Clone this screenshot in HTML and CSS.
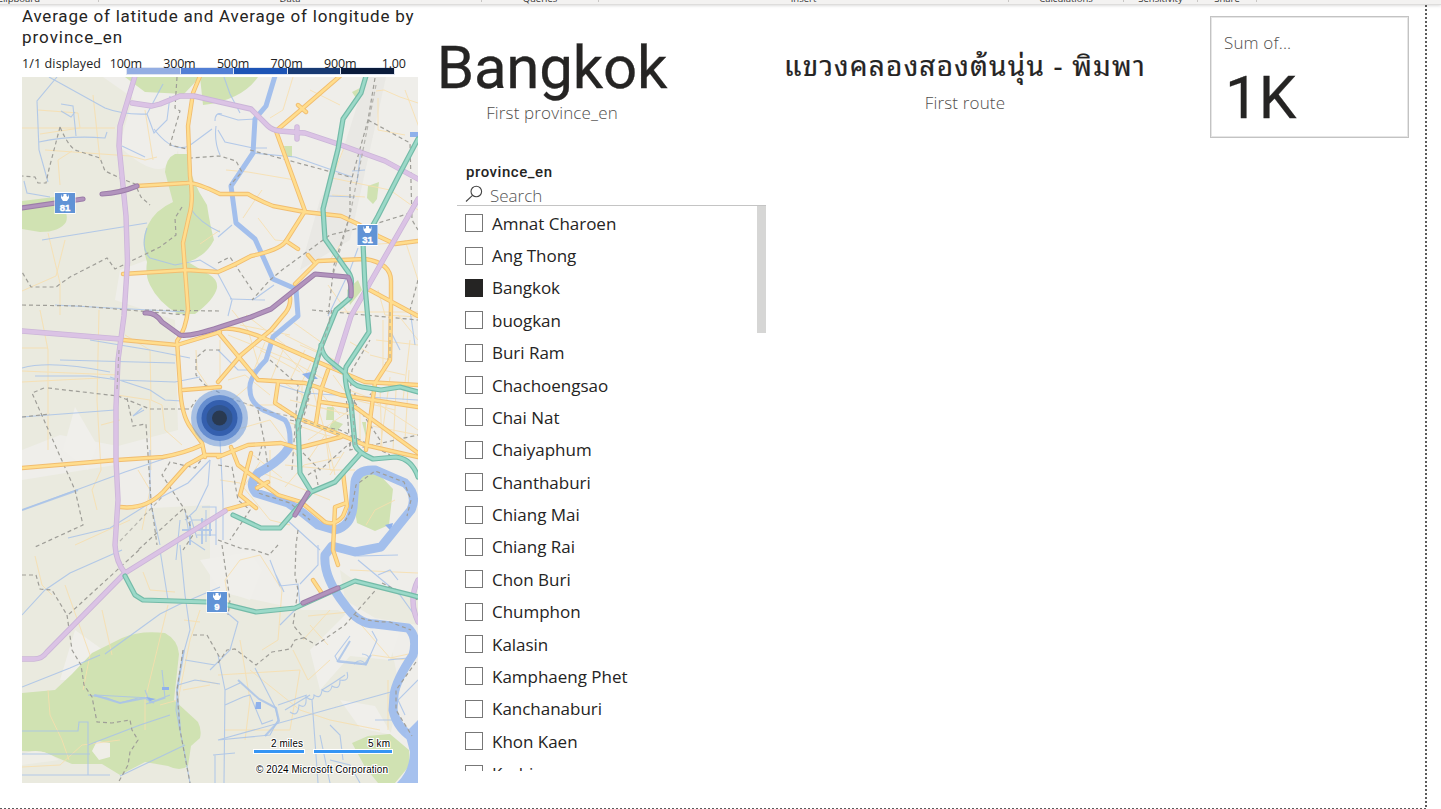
FILE: index.html
```html
<!DOCTYPE html>
<html lang="en">
<head>
<meta charset="utf-8">
<title>Province report</title>
<link rel="stylesheet" href="styles.css">
</head>
<body>
<header class="ribbon">
  <span>Clipboard</span><span>Data</span><span>Queries</span><span>Insert</span><span>Calculations</span><span>Sensitivity</span><span>Share</span>
</header>
<main class="canvas">
  <section class="map-visual">
    <h2 class="map-title"><span class="t1">Average of latitude and Average of longitude by</span><br><span class="t2">province_en</span></h2>
    <div class="legend">
      <span class="shown">1/1 displayed</span>
      <div class="scale">
        <div class="ticks"><span>100m</span><span>300m</span><span>500m</span><span>700m</span><span>900m</span><span>1.00</span></div>
        <div class="bar"><i class="c1"></i><i class="c2"></i><i class="c3"></i><i class="c4"></i><i class="c5"></i></div>
      </div>
    </div>
    <svg class="map" viewBox="22 77 396 706" width="396" height="706">
      <defs>
        <g id="toll">
          <path d="M135 76L120 126L119 146L126 216L127.500 262L124 316L118 360L116 407V460L118 500L115 545Q116 562 125 573L47 652Q42 659 34 659H22M125 573L170 545L225 511"/>
          <path d="M132 103L152 106L160 104L180 96L194 96L220 102L251 109L268 126Q272 130 280 131L305 133L338 144L385 161L418 179M418 199L351 316L335 367M22 331L120 339M418 580Q408 600 418 622M297 127V139"/>
        </g>
        <g id="teal">
          <path d="M366 76L361 93L343 119L338 149L323 209L325 239L346 269Q353 277 351 285L350 298L336 310L321 347L298 423L300 473L311 491"/>
          <path d="M321 345Q322 355 330 361L345 373Q353 386 362 387L381 390L400 387L418 392M418 139L400 173L378 216L363 243L365 286L369 332L346 367Q343 380 351 403L355 445Q357 452 373 459L396 457Q412 459 418 477M361 453L335 482L311 492L280 528H261L233 515"/>
          <path d="M125 576L135 595L143 600L207 602L228 605L256 612L295 608L355 581L411 595L418 597"/>
        </g>
        <g id="violet">
          <path d="M22 208L83 199M102 194Q120 193 137 186M145 313Q155 312 162 322L180 335Q190 337 220 327L251 317L271 309L315 274L348 277Q352 284 351 296M308 493L295 515M303 603L338 588"/>
        </g>
        <g id="major">
          <path d="M200 76L193 93L188 126L190 176Q194 200 189 216L183 243L188 309Q186 330 177 341L180 385Q181 415 191 428L202 443L205 457"/>
          <path d="M137 186L187 183Q195 182 220 194L248 194Q262 202 273 206L305 212L341 216L358 224L378 236L395 244L418 241M340 76L303 108L276 131L305 211L286 241Q280 250 251 256Q235 265 218 272L187 270L123 274"/>
          <path d="M286 241L298 249M308 255L315 263M295 284L318 261L365 259Q391 263 391 281V306L390 360L375 383L366 450M368 289L418 316M290 297Q291 305 286 312L271 330L241 355L218 382M123 340L177 345L220 332"/>
          <path d="M218 330Q230 325 261 337L318 362L365 382L418 385M218 332L258 380L305 383L341 395L418 407M328 370L321 390L316 423M278 383L275 403L298 418L341 435L365 445L418 457M321 402L355 407L418 453M341 437L298 448L281 443L248 445L218 457"/>
          <path d="M183 390L220 387M22 468L117 460L163 457Q185 453 202 445M120 507Q145 510 163 492L187 465L205 455H220M231 447L238 465L278 495L301 502L325 522Q335 526 343 516L347 506L343 473M251 453L240 495L256 508M250 503L225 510M346 503L335 507L333 550L338 565M313 580L321 592M257 488L268 482M298 105L306 112"/>
        </g>
        <g id="marker"><rect x="-10.500" y="-11" width="21" height="22" fill="#fff"/><rect x="-10" y="-10" width="20" height="20" fill="#6093d6"/><path d="M-4 -9L-3 -6L-1.500 -7V-9H1.500V-7L3 -6L4 -9V-5L2 -2H-2L-4 -5Z" fill="#fff"/></g>
      </defs>
      <rect x="22" y="77" width="396" height="706" fill="#efeeea"/>
      <!-- land cover -->
      <path fill="#eaeadf" d="M22 77H103L133 98L119 146Q166 190 178 150L188 245L120 270L115 300L175 320L178 430L118 446L60 435L22 450ZM22 480L115 465V510L210 505V590L303 610L338 610L390 640L400 690L380 783H22V659L125 573L118 510L22 560ZM340 570L355 581L418 597V625L375 618L345 600ZM22 560L118 510L125 573L22 659Z"/>
      <g fill="#f0efeb"><path d="M75 407L97 445L88 470L63 450ZM75 630L103 650L125 640L100 680L60 680ZM310 650L350 610L400 630L390 660L350 656L320 690ZM375 706L392 735L360 728L340 700ZM200 560L250 552L262 570L250 600L220 590Z"/></g>
      <path fill="#e5e4df" opacity=".6" d="M366 77H386L350 240L300 270L320 200L340 160Z"/>
      <g fill="#d0e2b2">
        <path d="M125 77H200L184 94L145 92ZM177 77H258Q242 100 203 105L200 77ZM165 172Q166 158 175 154L187 154Q190 180 207 205Q210 225 214 240Q206 256 188 262L210 275Q218 280 217 288Q214 300 195 314H178Q158 302 150 285Q145 275 147 262Q140 240 148 225Q155 210 173 202ZM22 201L55 197Q70 210 66 222Q60 232 40 232L22 229ZM92 653L122 638Q140 630 165 633Q178 640 179 654L174 700L198 722Q202 730 200 738L191 746L188 766Q180 772 168 766L145 762L120 775L102 764L72 764L44 752L22 751V693L55 690L72 674ZM360 477L376 471L393 489L389 525L375 531L357 523L353 500ZM352 743L368 736L390 734L409 750L410 765L395 783H378L365 767Z"/>
        <path d="M368 186L379 182L377 199L373 204L367 198ZM347 290L358 280L362 290L350 305ZM327 407H334V420H326ZM333 420L343 424L337 431L328 430ZM284 146H292V157L286 156ZM362 422H366V437ZM352 92L360 88L356 98Z"/>
      </g>
      <path fill="#efeee7" d="M97 741L110 743V757L99 760L92 751ZM22 755Q38 745 59 760L22 765Z"/>
      <!-- residential and secondary streets -->
      <g class="street">
        <path d="M22 128H115M38 110L78 113L80 128L40 134M45 150L130 156L145 160L157 157M48 233L60 283L60 315M22 291L56 276L65 240M60 185L58 160L72 151M153 160L145 110M93 95L100 160M22 348H48M40 310L48 350V450M22 371L118 375M99 310L97 400L101 470L92 490M117 395L150 400L151 470M125 335L150 350L151 400L162 405L165 430L182 445M138 470L150 490L142 530M75 545L130 520M92 490L97 510M35 556L42 585L52 595M102 610L112 655M65 585L90 655L83 690M168 605L145 700L145 730M48 690L50 715L62 740L69 760M22 767L60 765L82 745L120 740M22 382L100 378M101 425L120 420"/>
        <path d="M143 572L150 590L175 592M200 610L190 640L184 670L178 700L160 705M184 620L200 622M183 690L210 685M200 680L218 684M230 610L225 580L240 560L260 555L282 590L278 640L262 650M303 640L330 610M308 616L350 612L390 658L418 652M293 650L308 680L330 660M310 625L328 645M372 655L406 660L398 685M350 570L418 573M218 675L300 670L290 730L225 730M240 640L250 700L245 740M250 670L300 710L330 720L380 730M388 730L388 680"/>
        <path d="M293 77L283 110L270 118M310 90L340 105M376 91L384 90L400 97L418 103M378 98V130L405 135M405 90L420 130M345 145L332 178L390 190L418 210M332 195L365 197M226 170L248 172L295 180M220 230L200 244M243 218L255 200L262 190M258 218L275 240L286 241M362 245L395 243M340 245L330 260M405 240L418 280M378 290L385 315L418 317M328 285L350 316M340 312L420 312"/>
        <path d="M196 350L197 370L212 392M220 340L220 380M232 310L248 330L260 370M246 315L285 345M240 325L290 335M228 380L245 375L270 395M232 400L250 385M235 430L270 420L300 460M247 405L282 405M278 345L310 380L326 435L335 475M290 320L325 345M285 335L325 355M300 345L335 360M305 375L340 415M290 400L330 410M325 430L330 470L355 470M308 460L325 435L352 440M285 465L335 470M270 450L270 490M255 470L330 500M220 480L240 483L270 520L290 525M355 400L395 410M383 320L383 370L405 375M398 315L418 340M376 340L418 345M370 355L390 360M372 400L418 430M380 390L382 450M396 390L393 450M367 425L418 435M410 340L403 400M333 375L355 405M308 440L350 410M302 385L302 415M265 342L250 380M395 500L375 510L366 525"/>
        <path d="M228 335L290 360L325 380M260 350L300 372M283 350L270 382M305 350L289 382M311 363L298 390M280 380L310 400M282 420L325 435M310 405L350 415M253 455L282 478M260 462L245 485M285 487L304 465L340 457M330 475L344 452M350 342L369 353M349 390L388 405M360 410L360 440M390 377L380 450M409 370L405 440"/>
      </g>
      <!-- canals -->
      <g class="canal">
        <path d="M57 77L37 101L39 150L48 182M49 77L105 108Q123 115 147 114L163 84M61 104L73 106L76 136M61 111L71 117L75 112M39 142Q70 135 105 138L107 132M24 181L27 193L50 197M42 240L147 223M122 146L145 157M147 114L154 133L167 120L170 96M154 129Q172 153 189 146L212 129M220 155Q214 142 216 126M215 121Q215 112 222 114M190 208Q200 223 220 232M147 228Q140 248 150 258L175 265L200 260L220 272M55 305L187 312M60 360L175 363M22 368Q50 360 110 372M35 376H90L118 380L175 382L200 377M90 340L150 350L190 358M110 377L150 390L165 400L182 401M22 417L115 410"/>
        <path d="M22 510L125 472L190 450M68 538L110 528L150 503L188 483L210 460M22 615L45 590L70 573L122 550M22 687L70 668L100 655M105 654L160 614L178 605L220 587M22 731H78L79 722L88 722V775M22 754H90M88 745L140 725L170 715M120 776L185 745M22 775H110M88 695L107 698L120 703L138 698M95 695L150 698M146 704L170 695M145 690L150 703L165 698L162 670M180 545L185 595L190 630L183 655L178 685L176 710L184 750L190 783M160 550L168 600M185 660L215 665M178 685L195 680L220 684M215 755V783M213 755L235 753"/>
        <path d="M218 740L398 690M218 605L238 622L230 650L210 670M255 668L275 707L278 720L270 735L218 740M218 655L225 690L224 783M225 705L243 697L250 695L262 724L273 720M312 700L318 783M330 725L340 735L343 760M278 705L307 695M276 575L284 592M270 560L280 586L298 584L300 605L280 625M318 545V565L300 584M343 547L358 556L398 555M358 560L400 595L418 620M378 575L390 570L398 580M372 631L377 640L366 665L338 662L335 656L350 636M322 690Q338 680 345 675M240 683L225 690M285 710L310 695M388 660L408 658M405 715L398 700L418 680M375 720H395M320 735L330 783M330 760L350 765L360 783"/>
        <path d="M224 77L230 94L240 113M218 114L238 120L255 119M218 130L225 142L253 148L267 148M253 153L295 157L352 177M218 237L232 225M218 274L232 300L228 316M230 299L265 300M253 300L274 285M358 248L350 270L328 316M361 150L357 182M328 196L355 197M365 170L352 171M218 350L238 370L260 370M278 385L305 393L350 396L418 400M390 330L400 350M410 310L415 345M210 460L208 485L196 510L185 520M202 507H216V545M192 520H212M197 535H216M206 510V542M190 515L197 538M185 510L190 540L205 550M287 520L320 550M220 440L223 500L223 540M180 520L176 560M160 545L150 500L150 450M144 410L133 416L142 408"/>
      </g>
      <g class="canal wide"><path d="M238 680L259 699L276 708L279 721L265 736M94 695L120 703L145 698L154 703M350 641L338 661L365 664L371 655M22 510L78 490M182 530H212M190 521V545M202 518V544M210 520V536M184 650L177 690L180 730"/></g>
      <path class="canal" d="M290 712Q298 718 299 705Q307 710 306 697Q314 703 314 695Q321 700 322 690Q330 695 332 686Q340 691 340 680Q350 682 347 672M354 664Q361 657 366 665Q373 655 362 654"/>
      <path fill="#8fb1eb" d="M256 702H261V709H255ZM146 697L156 699L150 701ZM162 687H169V690H162ZM302 374L311 372L318 379L308 379ZM410 132H418V137L410 137ZM385 525L393 523L391 531Z"/>
      <!-- Chao Phraya -->
      <path class="river narrow" d="M275 76L266 106L255 119L253 153L231 186L236 223L255 239L273 279L296 289L298 316L273 337L266 360Q248 378 250 390Q250 405 268 412L285 420Q291 428 290 445Q286 458 255 477"/>
      <path class="river" d="M290 445Q284 459 258 473Q248 484 256 493L288 503L303 513L318 525L335 530Q351 526 353 507L355 482Q357 469 375 470L405 483Q418 495 411 510L381 547L355 552L332 546L325 555Q323 577 345 605Q358 624 375 624L408 628Q418 637 413 655Q396 680 394 695L393 710Q397 730 418 741"/>
      <path fill="#a6c1ee" d="M405 733L418 720V783H397Q410 770 410 752Z"/>
      <!-- administrative borders -->
      <g class="border">
        <path d="M60 127L49 169L46 183L38 183L35 177L22 176M60 127Q70 150 78 151L100 158L105 171L120 178L135 184L141 197L150 205M177 77L175 108L180 111L170 145L187 149L190 158L220 156L236 161L242 172L230 185M182 207L175 218L176 235L160 247L115 269L107 258L70 277L56 287H31L22 272M22 305L80 306L187 315M145 310L220 311M22 417L50 414M44 388L32 393L75 490L83 525L35 547M48 388L118 396L150 409L190 409L196 400M127 398L133 426L146 424L151 500L157 545M220 350H205L196 358V375L205 385L220 393M205 455L195 468L170 462L162 475L185 510L193 535L183 550M183 509L138 550M139 550L68 615M22 575H36L40 589L52 590L67 615"/>
        <path d="M67 615L72 650L81 665L84 685L92 697L97 722L112 723L130 720L132 730L138 740L130 752L128 765L118 783M123 315L117 395M375 78L368 120L350 185L350 215L334 265L328 316M368 120L410 143L412 220L418 230M250 150L350 177M410 213L372 225L330 235L282 270L270 280L252 300M218 263L230 257L252 290M418 280L410 310M332 310L295 450M312 310L418 320M270 360L298 385L292 470M258 410L264 440L268 467M298 448L320 470L350 443M308 475L315 470L318 485M390 314L390 355L370 395M262 445L258 460M355 393L350 450L418 435M218 465L232 467L238 500L250 510L230 540M298 530L296 545L295 575L298 590L293 625L303 637L316 645L345 625L380 585M218 540L240 548L254 550L269 555L278 545M218 663L227 650L235 649L256 665L272 652L290 649L295 640L307 637M222 545L230 600L228 615"/>
        <path d="M345 521Q349 515 352 507L356 485L375 471L404 482L411 500L407 516M355 615Q365 622 390 622L411 630M416 662L396 690L396 710L412 736M382 583L418 600M380 440L350 395L352 370L370 340M290 420L340 430L390 455M183 650L177 690L180 730L190 783M193 635L207 635L220 658M345 380L350 450M258 480L258 493L290 503L310 520"/>
      </g>
      <!-- road network: casing then fill -->
      <g class="road"><use href="#major" stroke="#f1bd70" stroke-width="4.400"/><use href="#major" stroke="#ffdd8d" stroke-width="2.600"/></g>
      <g class="road"><use href="#toll" stroke="#cbb5d8" stroke-width="5.400"/><use href="#toll" stroke="#dbc3e5" stroke-width="3.800"/></g>
      <g class="road"><use href="#teal" stroke="#74bba8" stroke-width="5.200"/><use href="#teal" stroke="#9bd9c8" stroke-width="2.800"/></g>
      <g class="road"><use href="#violet" stroke="#9c7da9" stroke-width="5.200"/><use href="#violet" stroke="#b294bd" stroke-width="3.200"/></g>
      <path class="border faint" d="M376 85L350 215L333 275M330 320L295 440M390 312V360M352 400L355 445M230 398L270 412L298 418L341 435M119 350L117 390M120 541L163 496"/>
      <!-- bubble -->
      <g transform="translate(219.500 418)"><circle r="28.500" fill="#6e9add" opacity=".55"/><circle r="23" fill="#4776c7" opacity=".68"/><circle r="18" fill="#345fae"/><circle r="13" fill="#30548f"/><circle r="7.500" fill="#293950"/></g>
      <g class="shield"><g transform="translate(65 203)"><use href="#marker"/><text y="8">81</text></g><g transform="translate(367.500 235)"><use href="#marker"/><text y="8">31</text></g><g transform="translate(217 602)"><use href="#marker"/><text y="8">9</text></g></g>
      <!-- scale and copyright -->
      <g class="scalebar"><path d="M253 751.500H305M313 751.500H393" stroke="#fff" stroke-width="5"/><path d="M254 751.500H304M314 751.500H392" stroke="#3595f4" stroke-width="3"/></g>
      <g class="map-note"><text x="271" y="747" textLength="32">2 miles</text><text x="368" y="747" textLength="22">5 km</text><text x="256" y="773" textLength="132">© 2024 Microsoft Corporation</text></g>
    </svg>
  </section>
  <section class="details">
    <div class="cards">
      <div class="card city"><div class="big">Bangkok</div><div class="caption">First province_en</div></div>
      <div class="card route"><div class="thai" lang="th">แขวงคลองสองต้นนุ่น - พิมพา</div><div class="caption">First route</div></div>
      <div class="card sum"><div class="caption">Sum of...</div><div class="big">1K</div></div>
    </div>
    <div class="slicer">
      <h3>province_en</h3>
      <div class="search"><svg width="18" height="18" viewBox="0 0 18 18"><circle cx="11.300" cy="6.500" r="5.300"/><path d="M7.500 10.300L1 16.500"/></svg><span>Search</span></div>
      <div class="list">
        <ul>
          <li><i></i>Amnat Charoen</li><li><i></i>Ang Thong</li><li><i class="on"></i>Bangkok</li><li><i></i>buogkan</li><li><i></i>Buri Ram</li><li><i></i>Chachoengsao</li><li><i></i>Chai Nat</li><li><i></i>Chaiyaphum</li><li><i></i>Chanthaburi</li><li><i></i>Chiang Mai</li><li><i></i>Chiang Rai</li><li><i></i>Chon Buri</li><li><i></i>Chumphon</li><li><i></i>Kalasin</li><li><i></i>Kamphaeng Phet</li><li><i></i>Kanchanaburi</li><li><i></i>Khon Kaen</li><li><i></i>Krabi</li>
        </ul>
        <div class="thumb"></div>
      </div>
    </div>
  </section>
</main>
</body>
</html>
```
FILE: styles.css
```css
* { box-sizing: border-box; }
body { margin: 0; background: #fff; color: #252423; font-family: "Open Sans", "Noto Sans", sans-serif; overflow: hidden; }
.ribbon { display: grid; grid-template-columns: 160px 383px 117px 410px 115px 74px 59px; margin-left: -61px; width: 1502px; height: 5px; overflow: hidden; background: #f3f2f1; border-bottom: 1px solid #dedddc; box-shadow: 0 1px 3px #0002; }
.ribbon span { height: 2px; border-right: 1px solid #c8c6c4; display: flex; justify-content: center; align-items: flex-end; font-size: 9.5px; line-height: 6px; color: #333; }
.canvas { display: flex; width: 1427px; height: 804px; padding-left: 22px;
  background: repeating-linear-gradient(to bottom, #5b5b5b 0 2px, transparent 2px 4px) right top / 2px 100% no-repeat,
  repeating-linear-gradient(to right, #5b5b5b 0 2px, transparent 2px 4px) left bottom / 100% 1px no-repeat; }
.map-visual { width: 396px; flex: none; }
.map-title { margin: 1px 0 0; font: 400 17px/21px Roboto, sans-serif; white-space: nowrap; }
.t1 { letter-spacing: .78px; }
.t2 { letter-spacing: .98px; }
.legend { display: flex; height: 29px; }
.shown { width: 77px; font-size: 12.500px; line-height: 31px; white-space: nowrap; letter-spacing: .12px; color: #222; }
.scale { width: 321px; flex: none; }
.ticks { display: grid; grid-template-columns: repeat(6, 53.600px); height: 19px; padding-top: 6px; font-size: 12.500px; line-height: 20px; text-align: center; letter-spacing: -.2px; color: #222; position: relative; }
.bar { display: grid; grid-template-columns: repeat(5, 1fr); gap: 1px; width: 269px; height: 8px; margin-left: 27px; padding: 1px; background: #dfe5f1; }
.c1 { background: #94aee3; } .c2 { background: #527fd5; } .c3 { background: #1d54b6; } .c4 { background: #183a73; } .c5 { background: #0a1b3b; }
.map { display: block; }
.street { fill: none; stroke: #f8dfae; stroke-width: 1; opacity: .85; }
.canal { fill: none; stroke: #a9c3e9; stroke-width: 1.1; opacity: .85; }
.wide { stroke-width: 2; }
.river { fill: none; stroke: #a3bfec; stroke-width: 9; stroke-linejoin: round; }
.narrow { stroke-width: 5; }
.border { fill: none; stroke: #9f9e98; stroke-width: 1.2; stroke-dasharray: 4 3; }
.faint { opacity: .7; }
.road { fill: none; stroke-linecap: round; stroke-linejoin: round; }
.shield text { fill: #fff; stroke: #fff; stroke-width: .4px; font: 700 9.500px "Liberation Sans", Arial, sans-serif; text-anchor: middle; }
.map-note text { font: 10px "Liberation Sans", Arial, sans-serif; fill: #000; stroke: #fff; stroke-width: 2px; paint-order: stroke; }
.details { width: 1009px; }
.cards { display: flex; height: 156px; padding-top: 11px; }
.card { display: flex; flex-direction: column; }
.caption { font-size: 17px; line-height: 24px; color: #504e4c; font-weight: 300; letter-spacing: .15px; }
.big { font: 400 60px/70px Roboto, sans-serif; -webkit-text-stroke: .3px #252423; }
.city { width: 268px; padding-top: 17px; align-items: center; white-space: nowrap; }
.city .big { letter-spacing: -.2px; }
.city .caption { line-height: 20px; }
.route { width: 490px; margin-left: 34px; padding-top: 28px; align-items: center; }
.thai { font: 28px/40px "Noto Sans Thai Looped", Loma, Waree, Garuda, "Noto Serif Thai", "Noto Sans Thai", "Noto Sans", sans-serif; letter-spacing: 1.2px; white-space: nowrap; -webkit-text-stroke: .2px #252423; }
.route .caption { margin-top: 4px; line-height: 30px; }
.sum { width: 199px; height: 122px; border: 1px solid #c3c3c3; outline: 1px solid #e6e6e6; outline-offset: -2px; padding: 14px 0 0 13px; }
.sum .big { margin: 8px 0 0 1px; }
.slicer { margin-left: 39px; width: 309px; padding-top: 2px; }
.slicer h3 { margin: 0 0 1px; padding-left: 9px; font: 500 15px/18px Roboto, sans-serif; letter-spacing: .55px; }
.search { display: flex; height: 24px; padding-left: 8px; border-bottom: 1px solid #c4c4c4; color: #555; font-size: 17px; font-weight: 300; line-height: 27px; }
.search svg { margin-top: 3px; fill: none; stroke: #444; stroke-width: 1.1; }
.search span { margin-left: 7px; }
.list { display: flex; height: 565px; overflow: hidden; }
ul { margin: 0; padding: 1px 0 0 8px; list-style: none; flex: 1; }
li { display: flex; align-items: center; height: 32.380px; font-size: 17px; line-height: 23px; white-space: nowrap; letter-spacing: -.02px; }
li i { width: 18px; height: 18px; margin-right: 9px; border: 1px solid #777; flex: none; }
.on { background: #252423; border-color: #252423; }
.thumb { width: 9px; height: 127px; background: #d6d6d5; }
```
